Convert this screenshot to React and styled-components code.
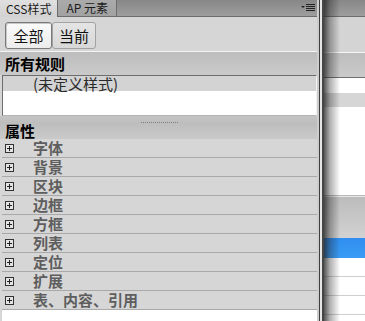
import React from "react";
import styled, { createGlobalStyle } from "styled-components";

const GlobalStyle = createGlobalStyle`
  html, body {
    margin: 0;
    padding: 0;
    background: #d6d6d6;
  }
  body {
    font-family: "Noto Sans CJK SC", "Liberation Sans", sans-serif;
  }
`;

const Screen = styled.div`
  width: 365px;
  height: 321px;
  display: flex;
  overflow: hidden;
`;

const Panel = styled.div`
  width: 317px;
  display: flex;
  flex-direction: column;
  background: #d6d6d6;
`;

const TabBar = styled.div`
  height: 16px;
  display: flex;
  align-items: stretch;
  background: linear-gradient(#878787, #9e9e9e);
  border-bottom: 1px solid #6c6c6c;
`;

const Tab = styled.div`
  display: flex;
  align-items: center;
  padding: 0 ${({ $pad }) => $pad}px;
  font-size: 12px;
  line-height: 14px;
  color: #1a1a1a;
  background: ${({ $active }) =>
    $active ? "linear-gradient(#e0e0e0, #d2d2d2)" : "linear-gradient(#aaaaaa, #a2a2a2)"};
  border-right: 1px solid #6c6c6c;
  margin-bottom: ${({ $active }) => ($active ? "-1px" : "0")};
`;

const MenuButton = styled.div`
  margin-left: auto;
  margin-right: 2px;
  display: flex;
  align-items: center;
`;

const Toolbar = styled.div`
  height: 35px;
  box-sizing: border-box;
  padding: 5px 0 0 5px;
  display: flex;
  background: #d6d6d6;
  border-bottom: 1px solid #f4f4f4;
`;

const ToggleButton = styled.button`
  height: 27px;
  width: ${({ $w }) => $w}px;
  box-sizing: border-box;
  padding: 0;
  font-family: inherit;
  font-size: 15px;
  line-height: 25px;
  color: #111;
  border: 1px solid ${({ $active }) => ($active ? "#7a7a7a" : "#a2a2a2")};
  border-radius: 3px;
  background: ${({ $active }) =>
    $active ? "linear-gradient(#fbfbfb, #ececec)" : "linear-gradient(#e4e4e4, #d8d8d8)"};
  box-shadow: ${({ $active }) => ($active ? "inset 1px 1px 0 #c8c8c8" : "none")};
`;

const SectionHeader = styled.div`
  height: ${({ $h }) => $h}px;
  box-sizing: border-box;
  padding-left: 5px;
  display: flex;
  align-items: center;
  font-size: 15px;
  font-weight: bold;
  line-height: 16px;
  color: #000;
  background: linear-gradient(#bdbdbd, #cacaca);
`;

const RuleBox = styled.div`
  margin-left: 2px;
  height: 41px;
  box-sizing: border-box;
  border-top: 1px solid #6e6e6e;
  border-left: 1px solid #6e6e6e;
  border-right: 1px solid #f2f2f2;
  border-bottom: 1px solid #b4b4b4;
  background: #fff;
  box-shadow: 0 1px 0 #f6f6f6;
`;

const RuleRow = styled.div`
  height: 15px;
  padding-left: 30px;
  font-size: 15px;
  line-height: 15px;
  color: #2a2a2a;
  background: #d3d3d3;
`;

const Splitter = styled.div`
  height: 7px;
  display: flex;
  justify-content: center;
  align-items: flex-end;
  background: linear-gradient(#c4c4c4, #bebebe);
`;

const Grip = styled.div`
  width: 38px;
  height: 1px;
  margin-left: 2px;
  background-image: linear-gradient(to right, #7c7c7c 50%, transparent 50%);
  background-size: 2px 1px;
`;

const PropRow = styled.div`
  height: 19px;
  box-sizing: border-box;
  margin-left: 2px;
  padding-left: 3px;
  display: flex;
  align-items: center;
  border-bottom: 1px solid #a9a9a9;
  background: #d6d6d6;
`;

const PropLabel = styled.span`
  margin-left: 19px;
  font-size: 15px;
  font-weight: bold;
  line-height: 18px;
  color: #5e5e5e;
`;

const Filler = styled.div`
  flex: 1;
  margin-left: 2px;
  background: #fff;
`;

const Divider = styled.div`
  width: 7px;
  background: linear-gradient(
    to right,
    #cdcdcd 0 2px,
    #3e3e3e 2px 3px,
    #e6e6e6 3px 5px,
    #464646 5px 7px
  );
`;

const Backdrop = styled.div`
  flex: 1;
  display: flex;
  flex-direction: column;
  position: relative;
  &::after {
    content: "";
    position: absolute;
    inset: 0;
    background: linear-gradient(
      to right,
      rgba(30, 30, 30, 0.75),
      rgba(30, 30, 30, 0.35) 6px,
      rgba(30, 30, 30, 0) 16px
    );
  }
`;

const Band = styled.div`
  height: ${({ $h }) => $h}px;
  flex-shrink: 0;
  background: ${({ $bg }) => $bg};
  border-bottom: ${({ $line }) => ($line ? `1px solid ${$line}` : "none")};
`;

const PlusIcon = () => (
  <svg width="9" height="9" viewBox="0 0 9 9">
    <rect x="0.5" y="0.5" width="8" height="8" fill="#e4e4e4" stroke="#333" />
    <path d="M2 4.5h5M4.5 2v5" stroke="#222" strokeWidth="1" />
  </svg>
);

const MenuIcon = () => (
  <svg width="14" height="8" viewBox="0 0 14 8">
    <path d="M0 2h4L2 4z" fill="#222" />
    <path d="M5 0.5h9M5 2.5h9M5 4.5h9M5 6.5h9" stroke="#222" strokeWidth="1" />
  </svg>
);

const properties = [
  "字体",
  "背景",
  "区块",
  "边框",
  "方框",
  "列表",
  "定位",
  "扩展",
  "表、内容、引用",
];

const App = () => {
  return (
    <>
      <GlobalStyle />
      <Screen>
        <Panel>
          <TabBar>
            <Tab $active $pad={6}>CSS样式</Tab>
            <Tab $pad={8}>AP 元素</Tab>
            <MenuButton>
              <MenuIcon />
            </MenuButton>
          </TabBar>
          <Toolbar>
            <ToggleButton $active $w={47}>全部</ToggleButton>
            <ToggleButton $w={44}>当前</ToggleButton>
          </Toolbar>
          <SectionHeader $h={23}>所有规则</SectionHeader>
          <RuleBox>
            <RuleRow>(未定义样式)</RuleRow>
          </RuleBox>
          <Splitter>
            <Grip />
          </Splitter>
          <SectionHeader $h={16}>属性</SectionHeader>
          {properties.map((name) => (
            <PropRow key={name}>
              <PlusIcon />
              <PropLabel>{name}</PropLabel>
            </PropRow>
          ))}
          <Filler />
        </Panel>
        <Divider />
        <Backdrop>
          <Band $h={16} $bg="linear-gradient(#878787, #9e9e9e)" $line="#6c6c6c" />
          <Band $h={35} $bg="#d4d4d4" $line="#f6f6f6" />
          <Band $h={24} $bg="linear-gradient(#bdbdbd, #cacaca)" $line="#6e6e6e" />
          <Band $h={15} $bg="#fff" />
          <Band $h={14} $bg="#d6d6d6" />
          <Band $h={88} $bg="#fff" $line="#b8b8b8" />
          <Band $h={1} $bg="#e8e8e8" />
          <Band $h={41} $bg="linear-gradient(#bcbcbc, #d2d2d2)" />
          <Band $h={20} $bg="linear-gradient(#2f8ef0, #3b9cf6)" />
          <Band $h={18} $bg="#fff" $line="#cfcfcf" />
          <Band $h={18} $bg="#fff" $line="#cfcfcf" />
          <Band $h={18} $bg="#fff" $line="#cfcfcf" />
          <Band $h={18} $bg="#fff" />
        </Backdrop>
      </Screen>
    </>
  );
};

export default App;
